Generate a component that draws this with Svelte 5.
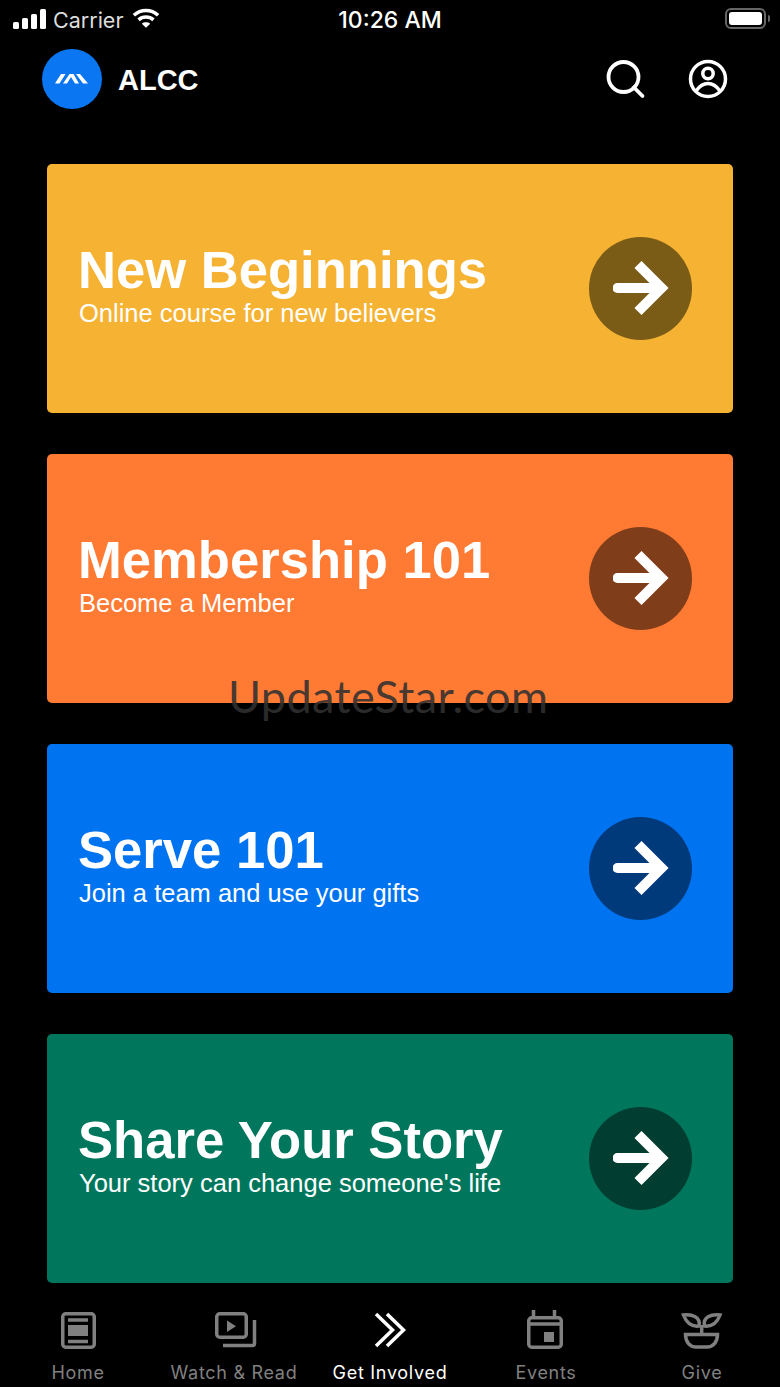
<script>
  const cards = [
    { title: 'New Beginnings', sub: 'Online course for new believers', color: '#f6b233', dark: '#7a5c17' },
    { title: 'Membership 101', sub: 'Become a Member', color: '#ff7a33', dark: '#7f3e19' },
    { title: 'Serve 101', sub: 'Join a team and use your gifts', color: '#0073f0', dark: '#003a7b' },
    { title: 'Share Your Story', sub: "Your story can change someone's life", color: '#00775c', dark: '#013d30' }
  ];
</script>

<div class="page">
  <div class="status">
    <div class="status-left">
      <svg class="lift" width="33" height="20" viewBox="0 0 33 20" fill="#fff">
        <rect x="0" y="13" width="6" height="7" rx="1.5" />
        <rect x="9" y="9" width="6" height="11" rx="1.5" />
        <rect x="18" y="5" width="6" height="15" rx="1.5" />
        <rect x="27" y="0" width="6" height="20" rx="1.5" />
      </svg>
      <span>Carrier</span>
      <svg class="lift wifi" width="28" height="21" viewBox="0 0 30 22" fill="none" stroke="#fff" stroke-width="3.8">
        <path d="M2 7.5C9.5 .8 20.5 .8 28 7.5" />
        <path d="M7 12.5C11.5 8.5 18.5 8.5 23 12.5" />
        <path d="M15 21l-4.5-4.5c2.5-2 6.5-2 9 0z" fill="#fff" stroke="none" />
      </svg>
    </div>
    <div class="clock">10:26 AM</div>
    <div class="status-right">
      <div class="battery"><div class="battery-fill"></div></div>
      <div class="battery-cap"></div>
    </div>
  </div>

  <header>
    <div class="brand">
      <div class="logo">
        <svg width="36" height="12" viewBox="0 0 36 12" fill="#fff">
          <path d="M1 10.5h4.5l6-9.5H7z" />
          <path d="M9 10.5h4l4-6.5 4 6.5h4L19.5 1h-4z" />
          <path d="M22 1h4l8 9.5h-5z" />
        </svg>
      </div>
      <span class="brand-name">ALCC</span>
    </div>
    <div class="actions">
      <svg width="42" height="42" viewBox="0 0 42 42" fill="none" stroke="#fff" stroke-width="3.8">
        <circle cx="18.5" cy="19" r="15" />
        <path d="M29 29.5l8.5 8.5" stroke-linecap="round" />
      </svg>
      <svg width="40" height="40" viewBox="0 0 40 40" fill="none" stroke="#fff" stroke-width="3.5">
        <circle cx="20" cy="20" r="17.5" />
        <circle cx="20" cy="14.5" r="5.2" />
        <path d="M8 32c3.5-5 7.5-7.5 12-7.5s8.500 2.500 12 7.500" />
      </svg>
    </div>
  </header>

  <main>
    {#each cards as card}
      <div class="card" style="background: {card.color}">
        <div class="card-text">
          <div class="title">{card.title}</div>
          <div class="sub">{card.sub}</div>
        </div>
        <div class="go" style="background: {card.dark}">
          <svg width="56" height="56" viewBox="0 0 56 56" fill="none" stroke="#fff" stroke-width="10">
            <path d="M4.5 28H46" stroke-linecap="round" />
            <path d="M25 4.5L48.5 28 25 51.5" />
          </svg>
        </div>
      </div>
    {/each}
  </main>

  <nav>
    <div class="tab">
      <svg width="48" height="40" viewBox="0 0 48 40" fill="none" stroke="#808080" stroke-width="3.5">
        <rect x="8.75" y="3.75" width="31.5" height="33.5" rx="3" />
        <path d="M14 10h20M14 31.5h20" />
        <rect x="14" y="15" width="20" height="11" fill="#808080" stroke="none" />
      </svg>
      <span>Home</span>
    </div>
    <div class="tab">
      <svg width="48" height="40" viewBox="0 0 48 40" fill="none" stroke="#808080" stroke-width="3.5">
        <rect x="6.75" y="3.75" width="29.5" height="23.5" rx="3" />
        <path d="M13 35.5h29.5a2 2 0 0 0 2-2V10" />
        <path d="M17 10.5l9 5.7-9 5.800z" fill="#808080" stroke="none" />
      </svg>
      <span>Watch &amp; Read</span>
    </div>
    <div class="tab active">
      <svg width="48" height="40" viewBox="0 0 48 40" fill="none" stroke="#fff" stroke-width="3.5">
        <path d="M10 4l16.5 16L10 36" />
        <path d="M21 4l16.5 16L21 36" />
      </svg>
      <span>Get Involved</span>
    </div>
    <div class="tab">
      <svg width="48" height="40" viewBox="0 0 48 40" fill="none" stroke="#808080" stroke-width="3.5">
        <rect x="6.75" y="7.75" width="32.5" height="29.5" rx="3" />
        <path d="M6.75 14h32.5M11.5 0v7M32.5 0v7" />
        <rect x="22" y="22" width="10" height="10" fill="#808080" stroke="none" />
      </svg>
      <span>Events</span>
    </div>
    <div class="tab">
      <svg width="48" height="40" viewBox="0 0 48 40" fill="none" stroke="#808080" stroke-width="3.5">
        <path d="M7.5 24.5h32c0 7.5-4.5 12.5-10.500 12.500H18c-6 0-10.500-5-10.500-12.500z" />
        <path d="M23.7 15v9.5" />
        <path d="M5.5 5c8.5-1 17.5 2 15.5 11-8 1-12.5-3-15.500-11z" />
        <path d="M42 5c-9-1-17.500 2-15.500 11 8 1 12.500-3 15.500-11z" />
      </svg>
      <span>Give</span>
    </div>
  </nav>

  <div class="watermark">UpdateStar.com</div>
</div>

<style>
  :global(body) {
    background: #000;
  }

  .page {
    position: relative;
    width: 780px;
    height: 1387px;
    background: #000;
    color: #fff;
    overflow: hidden;
    font-family: Inter, "Liberation Sans", sans-serif;
    display: flex;
    flex-direction: column;
  }

  .status {
    height: 40px;
    padding: 0 10px 0 13px;
    display: grid;
    grid-template-columns: 1fr auto 1fr;
    align-items: center;
    font-size: 23px;
  }

  .status-left {
    display: flex;
    align-items: center;
    gap: 7px;
  }

  .status-left span {
    color: #ddd;
    font-size: 21.5px;
  }

  .lift {
    margin-bottom: 3px;
  }

  .wifi {
    margin-left: 2px;
  }

  .clock {
    font-weight: 500;
    padding-right: 3px;
  }

  .status-right {
    display: flex;
    align-items: center;
    justify-content: flex-end;
    gap: 2px;
    margin-bottom: 3px;
  }

  .battery {
    width: 41px;
    height: 21px;
    border: 2px solid #666;
    border-radius: 6px;
    padding: 2px;
    box-sizing: border-box;
  }

  .battery-fill {
    height: 100%;
    background: #fff;
    border-radius: 3px;
  }

  .battery-cap {
    width: 2px;
    height: 7px;
    background: #666;
    border-radius: 0 2px 2px 0;
  }

  header {
    height: 78px;
    padding: 0 52px 0 42px;
    display: flex;
    align-items: center;
    justify-content: space-between;
  }

  .brand {
    display: flex;
    align-items: center;
    gap: 16px;
  }

  .logo {
    width: 60px;
    height: 60px;
    border-radius: 50%;
    background: #0a76f2;
    display: flex;
    align-items: center;
    justify-content: center;
  }

  .brand-name {
    font-size: 29px;
    font-weight: 700;
    font-family: "Liberation Sans", sans-serif;
    padding-top: 2px;
  }

  .actions {
    display: flex;
    align-items: center;
    gap: 41px;
  }

  main {
    margin-top: 46.2px;
    padding: 0 47px;
    display: flex;
    flex-direction: column;
    gap: 41.5px;
  }

  .card {
    height: 248.5px;
    border-radius: 5px;
    padding: 0 41px 0 32px;
    display: flex;
    align-items: center;
    justify-content: space-between;
  }

  .card-text {
    display: flex;
    flex-direction: column;
    padding-bottom: 6px;
  }

  .title {
    font-family: "Liberation Sans", sans-serif;
    font-weight: 700;
    font-size: 52.6px;
    line-height: 52px;
    margin-left: -1px;
  }

  .sub {
    font-family: "Liberation Sans", sans-serif;
    font-size: 25.5px;
    line-height: 26px;
    margin-top: 4px;
    color: #fff;
  }

  .go {
    width: 103px;
    height: 103px;
    border-radius: 50%;
    display: flex;
    align-items: center;
    justify-content: center;
  }

  nav {
    margin-top: auto;
    height: 104px;
    box-sizing: border-box;
    padding-top: 27px;
    display: grid;
    grid-template-columns: repeat(5, 1fr);
  }

  .tab {
    display: flex;
    flex-direction: column;
    align-items: center;
    color: #808080;
    font-size: 18px;
    letter-spacing: 0.7px;
    gap: 12px;
    white-space: nowrap;
  }

  .tab span {
    line-height: 22px;
  }

  .tab.active {
    color: #fff;
  }

  .watermark {
    position: absolute;
    left: 228px;
    top: 668px;
    font-size: 45px;
    line-height: 56px;
    font-family: Lato, sans-serif;
    font-weight: 400;
    letter-spacing: 0.4px;
    color: rgba(48, 48, 48, 0.9);
  }
</style>
